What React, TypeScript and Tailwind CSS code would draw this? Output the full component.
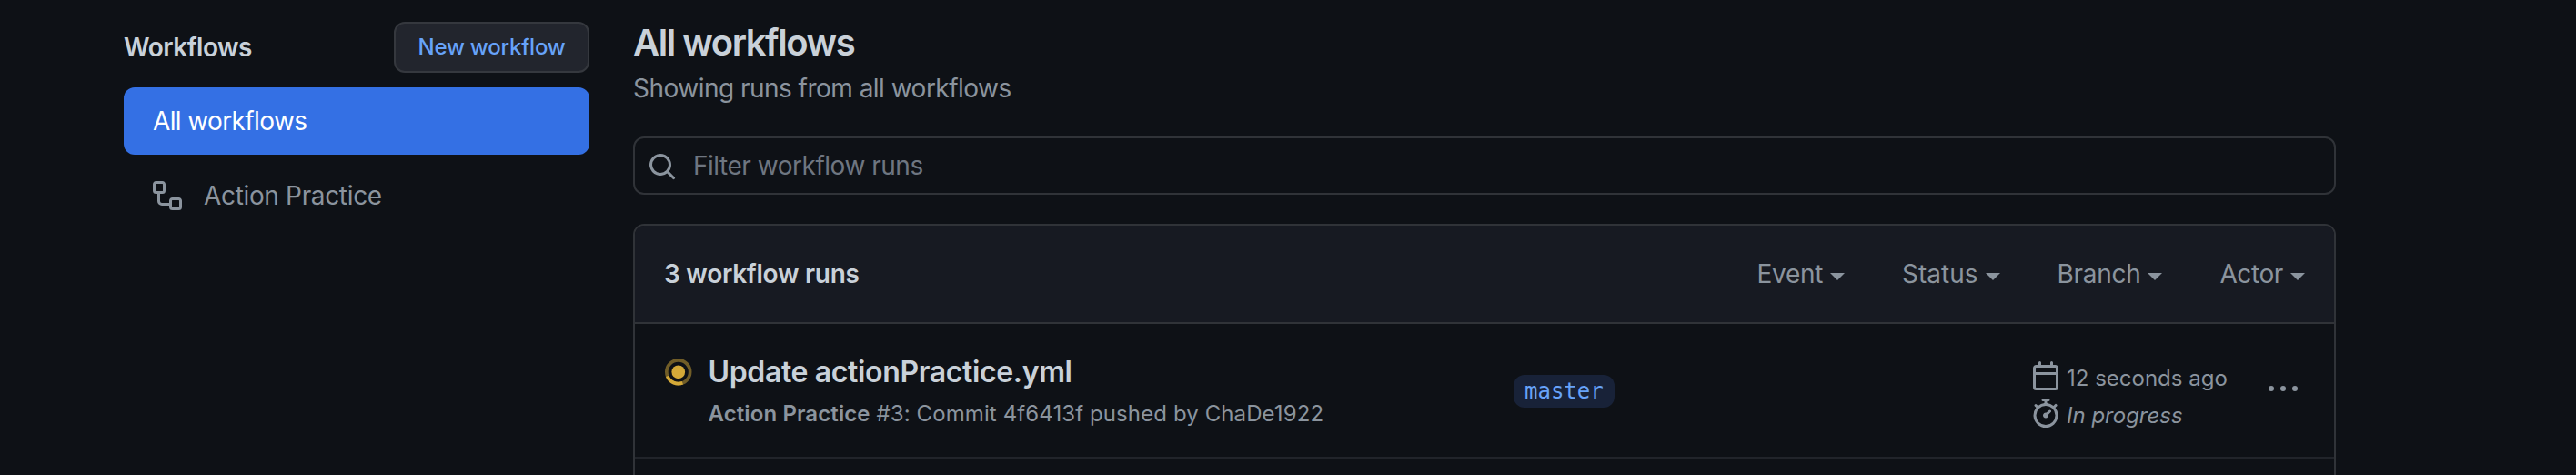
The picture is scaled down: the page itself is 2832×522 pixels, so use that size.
import type { ReactNode } from "react";

const icons = {
  workflow:
    "M0 1.75C0 .784.784 0 1.75 0h3.5C6.216 0 7 .784 7 1.75v3.5A1.75 1.75 0 015.25 7H4v4a1 1 0 001 1h4v-1.25C9 9.784 9.784 9 10.75 9h3.5c.966 0 1.75.784 1.75 1.75v3.5A1.75 1.75 0 0114.25 16h-3.5A1.75 1.75 0 019 14.25v-.75H5A2.5 2.5 0 012.5 11V7h-.75A1.75 1.75 0 010 5.25v-3.5zm1.75-.25a.25.25 0 00-.25.25v3.5c0 .138.112.25.25.25h3.5a.25.25 0 00.25-.25v-3.5a.25.25 0 00-.25-.25h-3.5zm9 9a.25.25 0 00-.25.25v3.5c0 .138.112.25.25.25h3.5a.25.25 0 00.25-.25v-3.5a.25.25 0 00-.25-.25h-3.5z",
  search:
    "M11.5 7a4.499 4.499 0 11-8.998 0A4.499 4.499 0 0111.5 7zm-.82 4.74a6 6 0 111.06-1.06l3.04 3.04a.75.75 0 11-1.06 1.06l-3.04-3.04z",
  calendar:
    "M4.75 0a.75.75 0 01.75.75V2h5V.75a.75.75 0 011.5 0V2h1.25c.966 0 1.75.784 1.75 1.75v10.5A1.75 1.75 0 0113.25 16H2.75A1.75 1.75 0 011 14.25V3.75C1 2.784 1.784 2 2.75 2H4V.75A.75.75 0 014.75 0zm0 3.5h8.5a.25.25 0 01.25.25V6h-11V3.75a.25.25 0 01.25-.25h2zm-2.25 4v6.75c0 .138.112.25.25.25h10.5a.25.25 0 00.25-.25V7.5h-11z",
  stopwatch:
    "M5.75.75A.75.75 0 016.5 0h3a.75.75 0 010 1.5h-.75v1l-.001.041a6.718 6.718 0 013.464 1.435l.007-.006.75-.75a.75.75 0 111.06 1.06l-.75.75-.006.007a6.75 6.75 0 11-10.548 0L2.72 5.03l-.75-.75a.75.75 0 011.06-1.06l.75.75.007.006A6.718 6.718 0 017.25 2.541a.756.756 0 010-.041v-1H6.5a.75.75 0 01-.75-.75zM8 14.5A5.25 5.25 0 108 4a5.25 5.25 0 000 10.5zm.389-6.7l1.33-1.33a.75.75 0 111.061 1.06L9.45 8.861A1.502 1.502 0 018 10.75a1.5 1.5 0 11.389-2.95z",
  kebab:
    "M8 9a1.5 1.5 0 100-3 1.5 1.5 0 000 3zM1.5 9a1.5 1.5 0 100-3 1.5 1.5 0 000 3zm13 0a1.5 1.5 0 100-3 1.5 1.5 0 000 3z",
};

function Icon({ name, className = "" }: { name: keyof typeof icons; className?: string }) {
  return (
    <svg viewBox="0 0 16 16" fill="currentColor" fillRule="evenodd" aria-hidden="true" className={`size-8 shrink-0 ${className}`}>
      <path d={icons[name]} />
    </svg>
  );
}

function InProgressIcon() {
  return (
    <svg viewBox="0 0 16 16" fill="none" aria-hidden="true" className="ml-px mr-0.5 mt-[38px] size-[29.5px] shrink-0 text-[#d4a938]">
      <circle cx="8" cy="8" r="7" stroke="currentColor" strokeWidth="2" opacity="0.5" />
      <circle cx="8" cy="8" r="4" fill="currentColor" />
      <path d="M15 8a7 7 0 01-7 7" stroke="currentColor" strokeWidth="2" transform="rotate(69 8 8)" />
    </svg>
  );
}

function Menu({ children, className }: { children: ReactNode; className: string }) {
  return (
    <button className="flex items-center gap-2">
      <span className={className}>{children}</span>
      <span className="mt-1.5 border-x-8 border-t-8 border-x-transparent border-t-current" />
    </button>
  );
}

function Sidebar() {
  return (
    <aside className="flex w-[512px] shrink-0 flex-col pt-6">
      <div className="flex h-14 items-center justify-between">
        <h3 className="font-semibold tracking-[-0.5px] text-[#c9d1d9]">Workflows</h3>
        <button className="flex h-14 w-[215px] items-center justify-center rounded-xl border-2 border-[#35383e] bg-[#22252d] text-2xl font-medium tracking-[-0.2px] text-[#67a3f9]">
          New workflow
        </button>
      </div>
      <a className="mt-4 flex h-[74px] items-center rounded-xl bg-[#3470e4] px-8 tracking-[-0.62px] text-white">All workflows</a>
      <a className="mt-2 flex h-[74px] items-center gap-6 px-8 tracking-[-0.34px]">
        <Icon name="workflow" />
        Action Practice
      </a>
    </aside>
  );
}

function RunRow() {
  return (
    <div className="flex h-[148px] border-b-2 border-[#21242a] px-8">
      <div className="flex w-[934px] gap-4">
        <InProgressIcon />
        <div className="pt-[31px]">
          <h4 className="text-[32px] leading-[44px] font-semibold tracking-[-0.36px] text-[#c9d1d9]">Update actionPractice.yml</h4>
          <p className="mt-1.5 text-2xl leading-9 tracking-[0.1px]">
            <span className="font-semibold">Action Practice</span> #3: Commit 4f6413f pushed by ChaDe1922
          </p>
        </div>
      </div>
      <div className="w-[569px] pt-14">
        <span className="flex h-9 w-fit items-center rounded-xl bg-[#182238] px-3 font-['DejaVu_Sans_Mono',monospace] text-2xl text-[#67a3f9]">
          master
        </span>
      </div>
      <div className="flex w-[261px] flex-col pt-[41px] text-2xl leading-8">
        <span className="flex items-start gap-[7px]">
          <Icon name="calendar" />
          <span className="pt-[3px]">12 seconds ago</span>
        </span>
        <span className="mt-1.5 flex items-start gap-[7px]">
          <Icon name="stopwatch" />
          <span className="pt-[3px] italic">In progress</span>
        </span>
      </div>
      <Icon name="kebab" className="mt-14" />
    </div>
  );
}

export default function App() {
  return (
    <div className="flex h-[522px] w-[2832px] gap-12 overflow-hidden bg-[#0e1116] pl-[136px] font-[Inter,sans-serif] text-[28px] leading-[42px] whitespace-nowrap text-[#8b949e]">
      <Sidebar />
      <main className="w-[1872px] shrink-0 pt-[23px]">
        <h2 className="text-[40px] leading-[48px] font-semibold tracking-[-1.45px] text-[#c9d1d9]">All workflows</h2>
        <p className="mt-[5px] tracking-[-0.52px]">Showing runs from all workflows</p>
        <div className="mt-8 flex h-16 items-center gap-[18px] rounded-xl border-2 border-[#303338] px-3.5">
          <Icon name="search" className="mt-0.5" />
          <span className="tracking-[-0.48px] text-[#6e7681]">Filter workflow runs</span>
        </div>
        <section className="mt-8 h-[300px] overflow-hidden rounded-t-xl border-2 border-b-0 border-[#303338]">
          <header className="flex h-[108px] items-center justify-between border-b-2 border-[#303338] bg-[#171a22] px-8">
            <strong className="font-semibold tracking-[-0.27px] text-[#c9d1d9]">3 workflow runs</strong>
            <div className="flex gap-[63px]">
              <Menu className="tracking-[-0.3px]">Event</Menu>
              <Menu className="tracking-[0px]">Status</Menu>
              <Menu className="tracking-[-0.3px]">Branch</Menu>
              <Menu className="tracking-[-0.4px]">Actor</Menu>
            </div>
          </header>
          <RunRow />
        </section>
      </main>
    </div>
  );
}
